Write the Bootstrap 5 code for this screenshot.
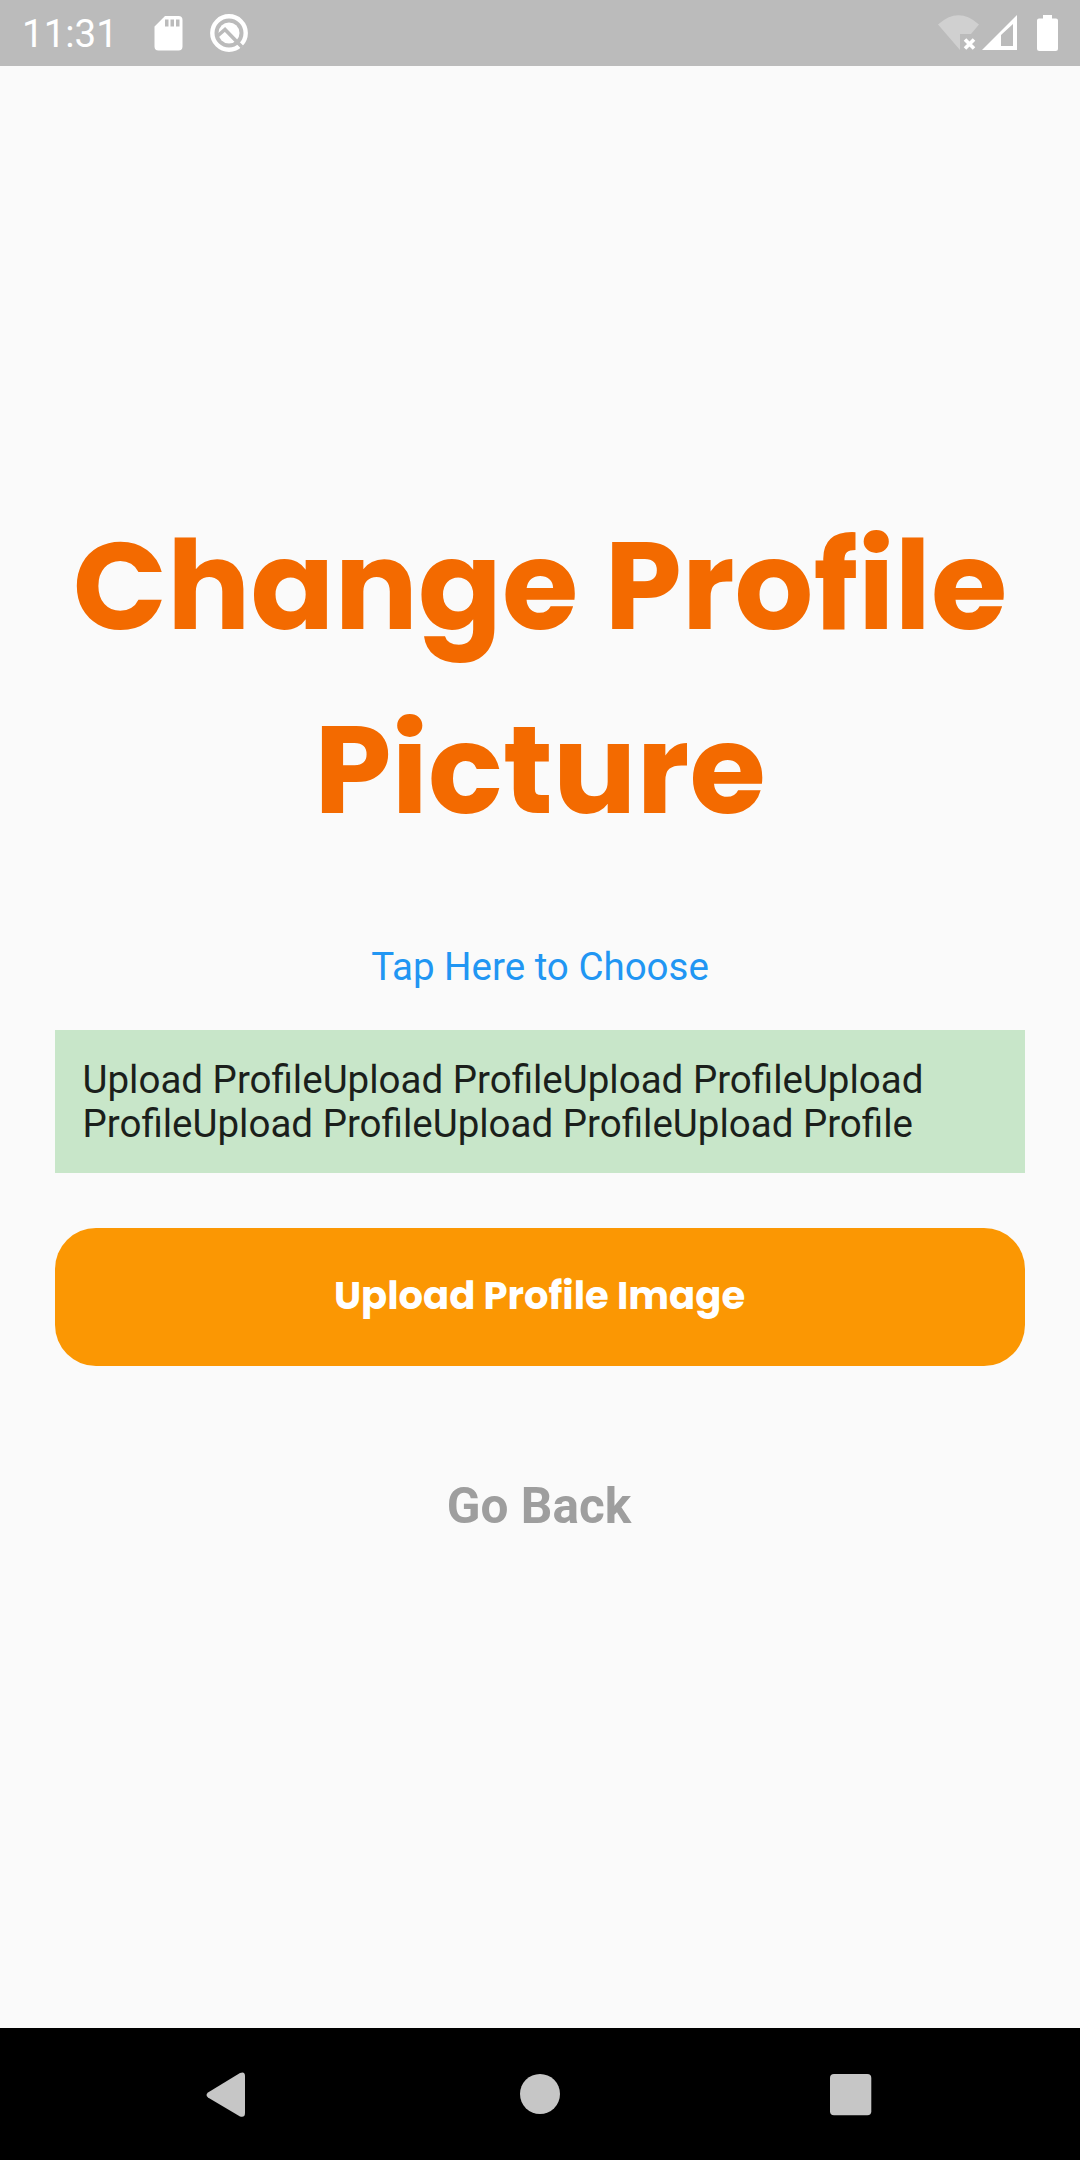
<!DOCTYPE html>
<html lang="en">
<head>
<meta charset="utf-8">
<meta name="viewport" content="width=device-width, initial-scale=1">
<title>Change Profile Picture</title>
<link href="https://cdn.jsdelivr.net/npm/bootstrap@5.3.0/dist/css/bootstrap.min.css" rel="stylesheet">
<style>
body{background:#fafafa;font-family:Roboto,"Noto Sans",sans-serif;font-size:38.5px;line-height:44px;color:#1b1f1b}
.status-bar{height:66px;background:#bbb;color:#fff;padding:0 21px 0 22px}
.status-bar svg,.nav-keys svg{display:block;flex:none}
.clock{width:131px;padding-top:2px}
.page-title{font-family:Poppins,Inter,sans-serif;font-weight:700;font-size:123.75px;line-height:184px;color:#f36a00;margin:0 0 83px}
.screen-body{padding:428px 55px 0}
.choose-link{color:#2196f3;margin-bottom:40.5px}
.upload-note{background:#c8e6c9;padding:28.5px 27.5px 26.5px;margin-bottom:55px}
.upload-btn{--bs-btn-bg:#fb9703;--bs-btn-color:#fff;--bs-btn-hover-bg:#fb9703;--bs-btn-hover-color:#fff;--bs-btn-border-width:0;--bs-btn-border-radius:41px;--bs-btn-font-family:Poppins,Inter,sans-serif;--bs-btn-font-size:38.5px;--bs-btn-font-weight:700;--bs-btn-line-height:58px;padding:39px 13px 41px 12px;margin-bottom:111px}
.back-link{font-size:49.5px;line-height:58px;color:#9e9e9e;padding-right:2px}
.nav-keys{height:132px;background:#000}
</style>
</head>
<body>
<div class="vh-100 d-flex flex-column overflow-hidden">
  <header class="status-bar d-flex align-items-center">
    <span class="clock">11:31</span>
    <svg width="110" height="66" viewBox="0 0 110 66" fill="#fff">
      <path fill-rule="evenodd" d="M12 16H25.500Q29.500 16 29.500 20V46.500Q29.500 50.500 25.500 50.500H5.500Q1.500 50.500 1.500 46.500V26.500ZM12 19.500V26.500H15.500V19.500ZM17.500 19.500V26.500H21V19.500ZM23 19.500V26.500H26.500V19.500Z"/>
      <circle cx="76" cy="33" r="16.700" fill="none" stroke="#fff" stroke-width="4.400"/>
      <circle cx="76" cy="33" r="10.500"/>
      <path d="M64.500 36L72 29.500L89 47" fill="none" stroke="#bbb" stroke-width="3.600"/>
    </svg>
    <svg class="ms-auto" width="122" height="66" viewBox="937 0 122 66" fill="#fff">
      <path fill="#d0d0d0" d="M938 24.500Q958.500 6 979 24.500L971 34H960V50Z"/>
      <path d="M965 39.500L974 48.500M974 39.500L965 48.500" stroke="#fff" stroke-width="3.600"/>
      <path fill-rule="evenodd" d="M982 50L1017 15V50ZM1001 35V46H1013V24Z"/>
      <path d="M1043 15H1052V18.500H1056Q1058 18.500 1058 20.500V48.500Q1058 51 1055.500 51H1039.500Q1037 51 1037 48.500V20.500Q1037 18.500 1039 18.500H1043Z"/>
    </svg>
  </header>
  <main class="screen-body flex-grow-1 d-flex flex-column text-center">
    <h1 class="page-title">Change Profile Picture</h1>
    <a class="choose-link text-decoration-none" href="#">Tap Here to Choose</a>
    <div class="upload-note text-start">Upload ProfileUpload ProfileUpload ProfileUpload ProfileUpload ProfileUpload ProfileUpload Profile</div>
    <button class="btn upload-btn w-100" type="button">Upload Profile Image</button>
    <a class="back-link fw-bold text-decoration-none" href="#">Go Back</a>
  </main>
  <nav class="nav-keys flex-shrink-0" aria-label="System">
    <svg width="1080" height="132" viewBox="0 0 1080 132" fill="#c6c6c6">
      <path d="M208 64.500L240 45Q245 43 245 48V85Q245 90 240 88.500L208 69.500Q205 67 208 64.500Z"/>
      <circle cx="540" cy="66" r="20"/>
      <rect x="830" y="46" width="41.300" height="41.300" rx="4"/>
    </svg>
  </nav>
</div>
<script src="https://cdn.jsdelivr.net/npm/bootstrap@5.3.0/dist/js/bootstrap.bundle.min.js"></script>
</body>
</html>
